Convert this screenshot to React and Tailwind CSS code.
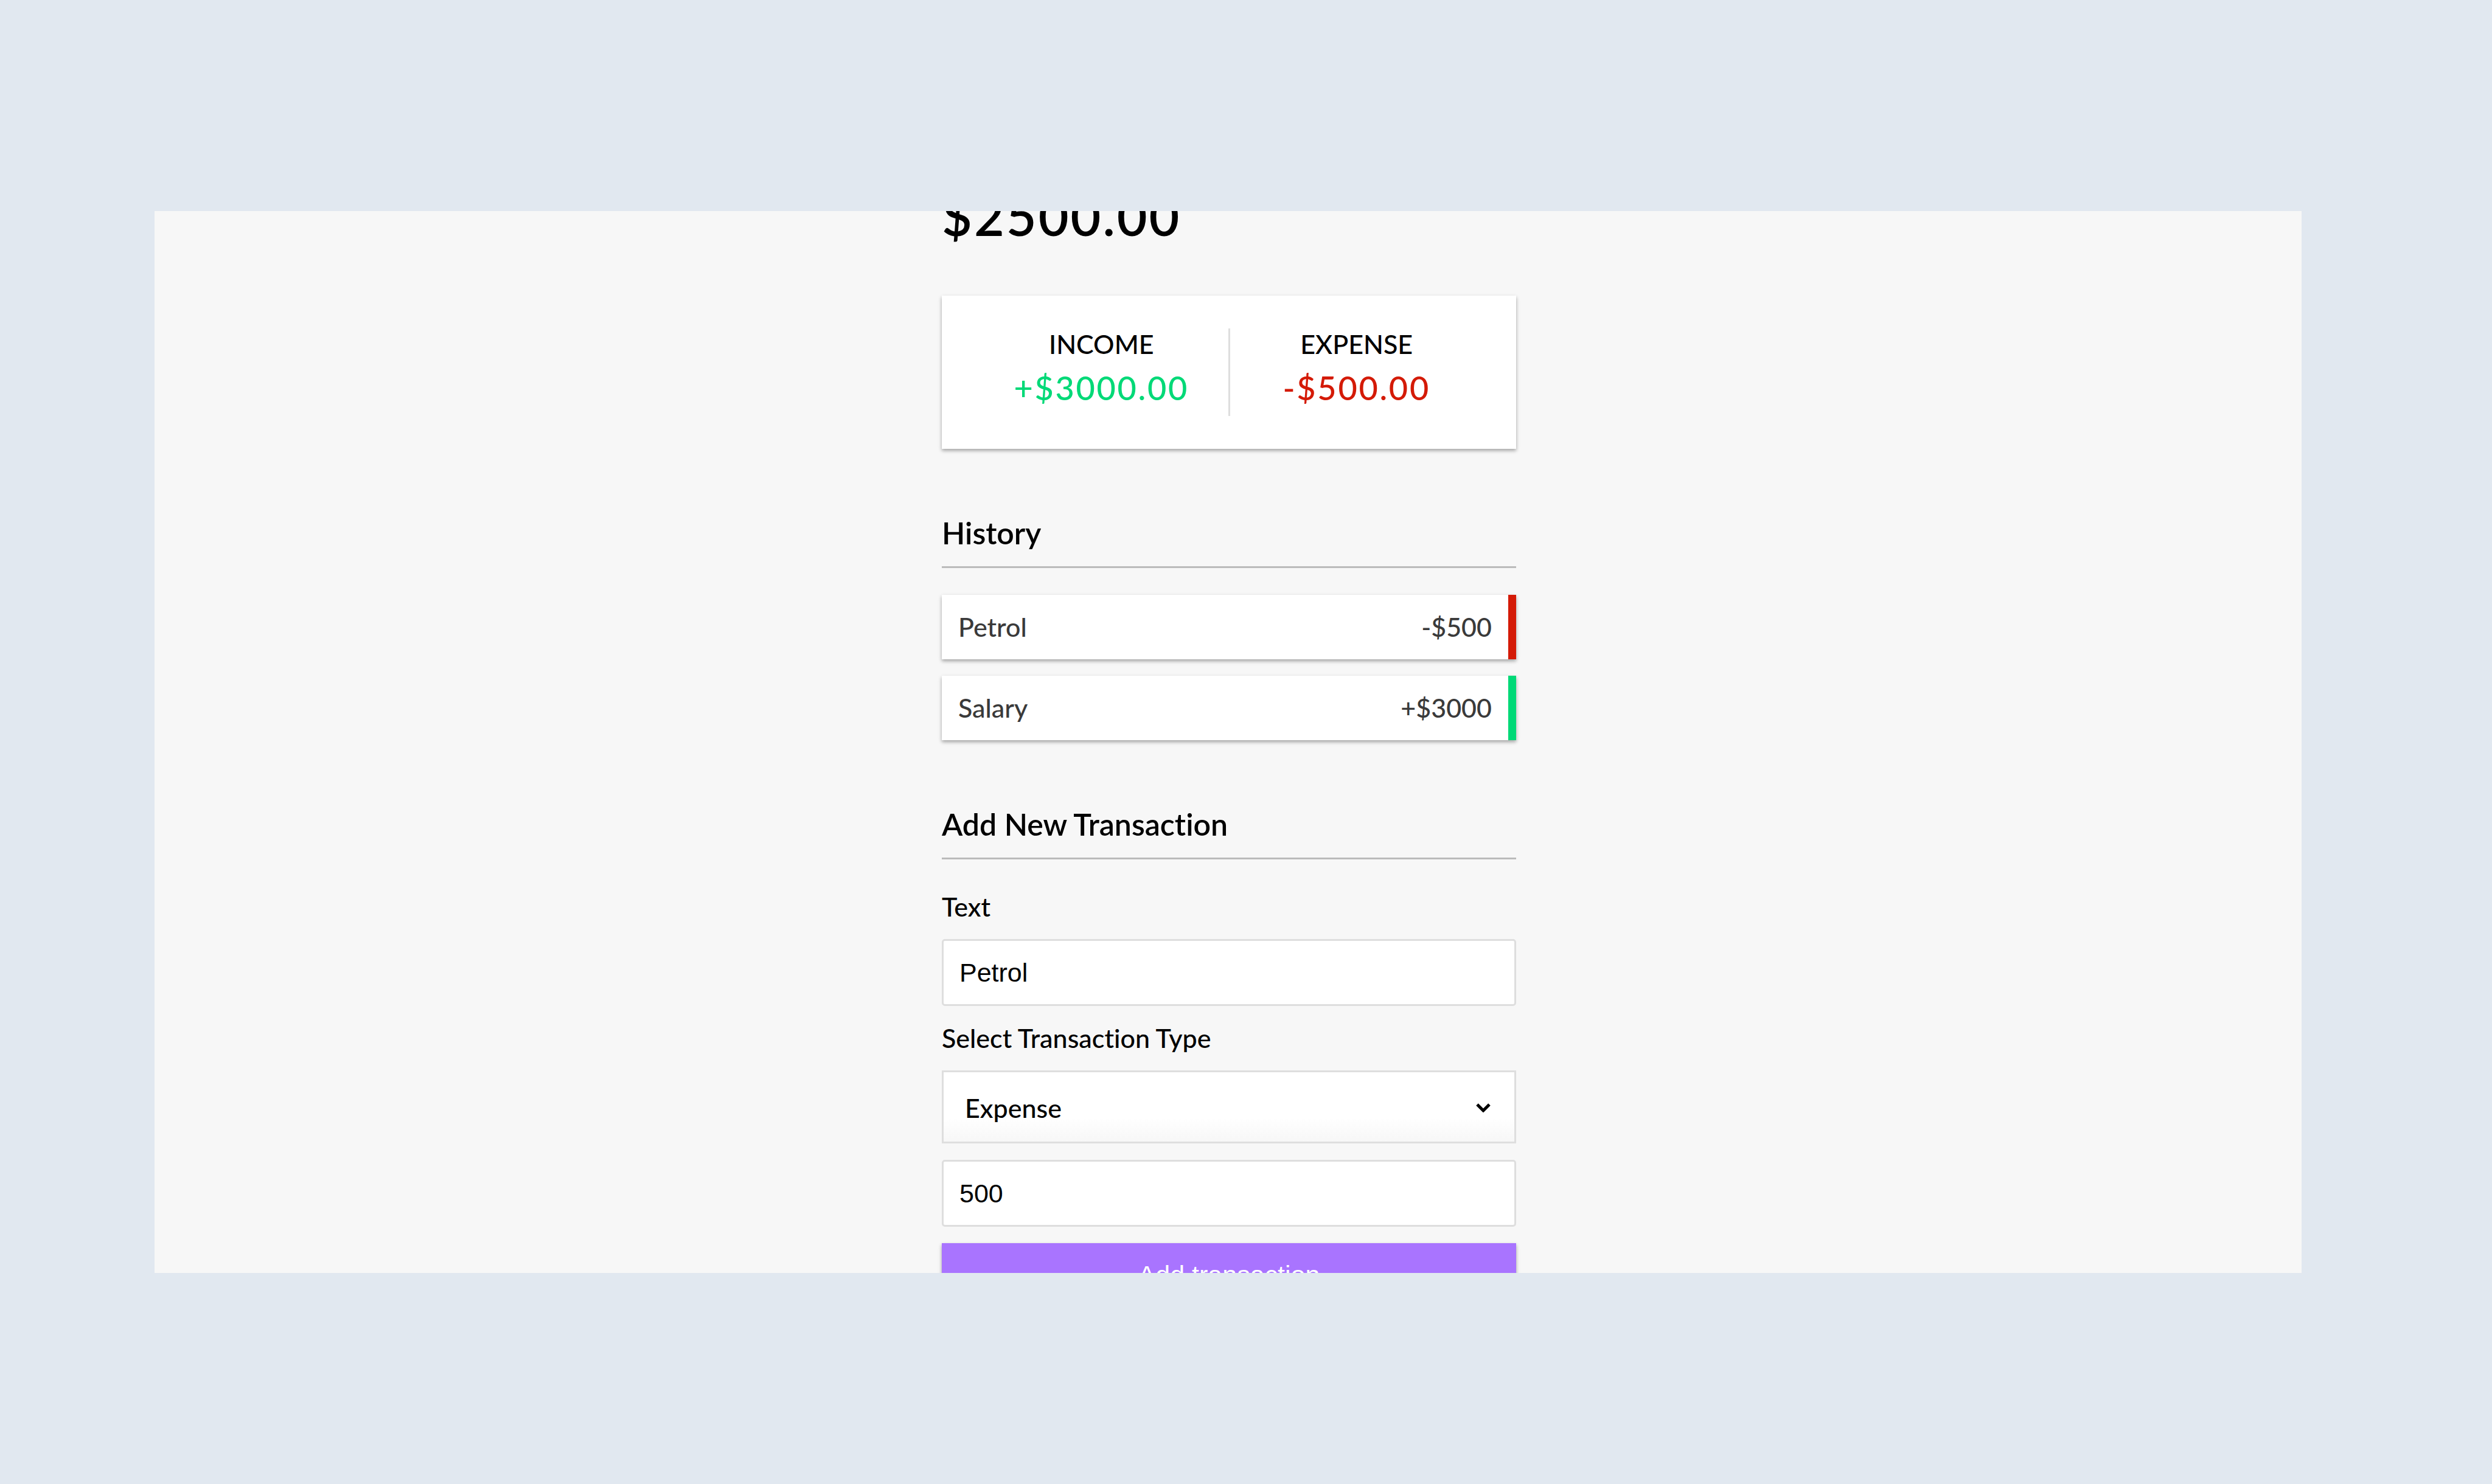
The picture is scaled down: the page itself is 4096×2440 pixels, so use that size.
import React, { useState } from "react";

const transactions = [
  { id: 1, text: "Petrol", amount: "-$500", edge: "border-[#d41a06]" },
  { id: 2, text: "Salary", amount: "+$3000", edge: "border-[#00d977]" },
];

const cardShadow = "shadow-[0_3px_8px_rgba(0,0,0,0.12),0_3px_5px_rgba(0,0,0,0.24)]";

function SectionTitle({ children }) {
  return (
    <h3 className="mt-[109px] border-b-[3px] border-[#bbbbbb] pb-[25px] text-[50px] leading-[59px] font-semibold">
      {children}
    </h3>
  );
}

function Summary() {
  return (
    <section className={`mt-[80px] flex bg-white p-[54px] text-center ${cardShadow}`}>
      <div className="flex-1 border-r-[3px] border-[#dedede]">
        <h4 className="uppercase">Income</h4>
        <p className="my-[13px] text-[54px] leading-[66px] tracking-wider text-[#00d977]">+$3000.00</p>
      </div>
      <div className="flex-1">
        <h4 className="uppercase">Expense</h4>
        <p className="my-[13px] text-[54px] leading-[66px] tracking-wider text-[#d41a06]">-$500.00</p>
      </div>
    </section>
  );
}

function History() {
  return (
    <section>
      <SectionTitle>History</SectionTitle>
      <ul className="mt-[44px] flex flex-col gap-[27px]">
        {transactions.map((t) => (
          <li
            key={t.id}
            className={`flex justify-between border-r-[13px] bg-white p-[27px] text-[#3a3a3a] ${t.edge} ${cardShadow}`}
          >
            <span>{t.text}</span>
            <span>{t.amount}</span>
          </li>
        ))}
      </ul>
    </section>
  );
}

function TransactionForm() {
  const [text, setText] = useState("Petrol");
  const [type, setType] = useState("Expense");
  const [amount, setAmount] = useState("500");
  const field =
    "block w-full rounded-[5px] border-[3px] border-[#dedede] bg-white px-[26px] py-[27px] font-['Liberation_Sans',sans-serif] text-[43px] leading-[50px] font-normal outline-none";

  return (
    <section>
      <SectionTitle>Add New Transaction</SectionTitle>
      <form className="mt-[52px]" onSubmit={(e) => e.preventDefault()}>
        <label htmlFor="text" className="mb-[27px] block">
          Text
        </label>
        <input id="text" type="text" value={text} onChange={(e) => setText(e.target.value)} className={field} />
        <label htmlFor="type" className="my-[27px] block">
          Select Transaction Type
        </label>
        <div className="relative">
          <select
            id="type"
            value={type}
            onChange={(e) => setType(e.target.value)}
            className="block w-full appearance-none rounded-none border-[3px] border-[#dedede] bg-white bg-linear-to-b from-white from-65% to-[#f7f7f7] px-[35px] pt-[33px] pb-[29px] leading-[52px] outline-none"
          >
            <option>Expense</option>
            <option>Income</option>
          </select>
          <svg
            aria-hidden="true"
            viewBox="0 0 24 15"
            className="pointer-events-none absolute top-[54px] right-[42px] h-[15px] w-[24px]"
            fill="none"
            stroke="black"
            strokeWidth="5"
          >
            <path d="M2 2 L12 12 L22 2" />
          </svg>
        </div>
        <input
          id="amount"
          type="text"
          inputMode="numeric"
          aria-label="Amount"
          value={amount}
          onChange={(e) => setAmount(e.target.value)}
          className={`mt-[27px] ${field}`}
        />
        <button
          type="submit"
          className={`mt-[27px] block w-full bg-[#a974ff] p-[27px] font-['Liberation_Sans',sans-serif] text-[43px] leading-[50px] font-normal text-white ${cardShadow}`}
        >
          Add transaction
        </button>
      </form>
    </section>
  );
}

export default function App() {
  return (
    <div className="flex h-screen bg-[#e1e8f0] pt-[347px] pr-[313px] pb-[347px] pl-[254px] font-['Lato',sans-serif] text-[43px] leading-[52px] font-medium text-black [font-variant-ligatures:none]">
      <main className="flex flex-1 flex-col items-center overflow-hidden bg-[#f7f7f7] pl-[3px]">
        <div className="-mt-[44px] w-full max-w-[944px]">
          <h1 className="text-[86px] leading-[103px] font-semibold tracking-[3px]">$2500.00</h1>
          <Summary />
          <History />
          <TransactionForm />
        </div>
      </main>
    </div>
  );
}
